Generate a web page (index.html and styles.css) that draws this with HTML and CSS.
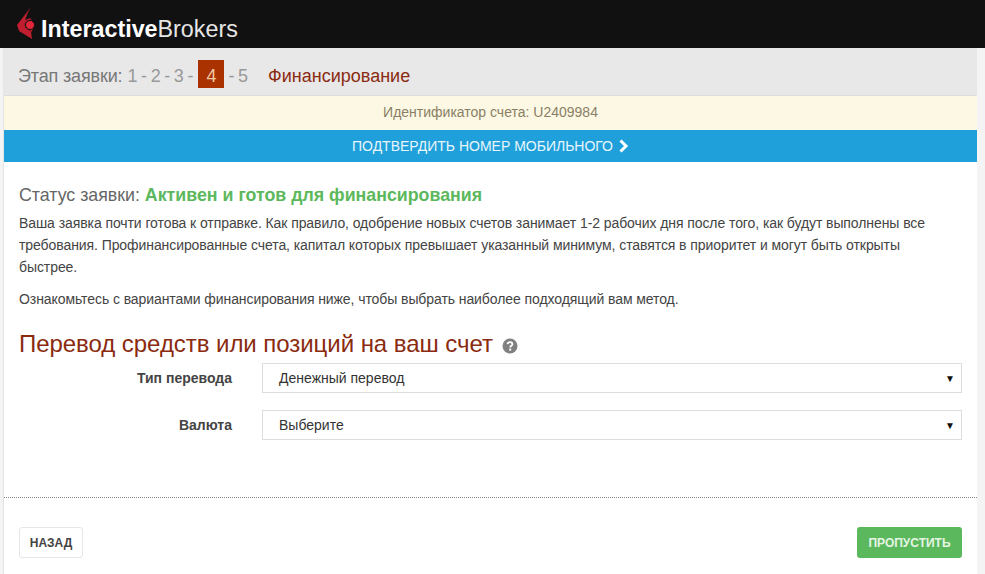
FILE: index.html
```html
<!DOCTYPE html>
<html lang="ru">
<head>
    <meta charset="UTF-8">
    <title>Interactive Brokers</title>
    <link rel="stylesheet" href="styles.css">
</head>
<body>
    <div class="top-bar">
        <svg class="logo-mark" width="18" height="32" viewBox="0 0 18 32">
            <path d="M14 0 L0 18 L2 24 L15 32 L14 25 L8 20 C7 13 10 7 14 0 Z" fill="#c01f30"/>
            <path d="M8 19 L8 13 L13 11 L18 18 L14 26 Z" fill="#a81a2a"/>
            <circle cx="13" cy="18" r="4.5" fill="#e3263a" stroke="#111" stroke-width="1"/>
        </svg>
        <span class="logo-text"><b>Interactive</b>Brokers</span>
    </div>
    <div class="panel">
        <div class="steps">
            <span class="steps-label">Этап заявки:</span>
            <span class="steps-nums">1 - 2 - 3 -</span>
            <span class="step-current">4</span>
            <span class="steps-nums steps-last">- 5</span>
            <span class="step-title">Финансирование</span>
        </div>
        <div class="account-id">Идентификатор счета: U2409984</div>
        <div class="confirm-bar">ПОДТВЕРДИТЬ НОМЕР МОБИЛЬНОГО
            <svg width="11" height="14" viewBox="0 0 11 14"><path d="M2.5 1.5 L8 7 L2.5 12.5" fill="none" stroke="#fff" stroke-width="3"/></svg>
        </div>
        <div class="content">
            <div class="status">Статус заявки: <b>Активен и готов для финансирования</b></div>
            <p>Ваша заявка почти готова к отправке. Как правило, одобрение новых счетов занимает 1-2 рабочих дня после того, как будут выполнены все требования. Профинансированные счета, капитал которых превышает указанный минимум, ставятся в приоритет и могут быть открыты быстрее.</p>
            <p>Ознакомьтесь с вариантами финансирования ниже, чтобы выбрать наиболее подходящий вам метод.</p>
            <h2>Перевод средств или позиций на ваш счет<svg class="help" width="16" height="16" viewBox="0 0 16 16"><circle cx="8" cy="8" r="7.5" fill="#808080"/><path d="M5.6 6.2 C5.8 4.8 6.8 4.2 8 4.2 C9.4 4.2 10.4 5 10.4 6.2 C10.4 7.8 8.2 7.8 8.2 9.4" fill="none" stroke="#fff" stroke-width="1.8"/><rect x="7.2" y="10.6" width="2" height="2" fill="#fff"/></svg></h2>
            <div class="form-row">
                <label>Тип перевода</label>
                <div class="select"><span>Денежный перевод</span><span class="arrow">▼</span></div>
            </div>
            <div class="form-row">
                <label>Валюта</label>
                <div class="select"><span>Выберите</span><span class="arrow">▼</span></div>
            </div>
        </div>
        <div class="actions">
            <button class="btn btn-back">НАЗАД</button>
            <button class="btn btn-skip">ПРОПУСТИТЬ</button>
        </div>
    </div>
</body>
</html>
```

FILE: styles.css
```css
html, body {
    margin: 0;
    height: 574px;
    overflow: hidden;
}

body {
    background-color: #f4f4f4;
    font-family: "Liberation Sans", Arial, sans-serif;
    color: #444;
}

.top-bar {
    height: 48px;
    background-color: #111;
    display: flex;
    align-items: flex-end;
    padding-left: 17px;
    box-sizing: border-box;
}

.logo-mark {
    margin-bottom: 9px;
    margin-right: 6px;
}

.logo-text {
    color: #e6e6e6;
    font-size: 23.3px;
    line-height: 27px;
    margin-bottom: 5px;
}

.logo-text b {
    color: #fff;
}

.panel {
    margin: 0 8px 0 3px;
    background-color: #fff;
    border-left: 1px solid #e4e4e4;
    height: 526px;
}

.steps {
    height: 48px;
    box-sizing: border-box;
    padding: 0 0 0 14px;
    background-color: #e8e8e8;
    border-bottom: 1px solid #ddd;
    display: flex;
    align-items: center;
    font-size: 18px;
    color: #777;
}

.steps-label {
    letter-spacing: -0.15px;
    padding-top: 10px;
}

.steps-nums {
    color: #999;
    margin-left: 5px;
    word-spacing: -1.4px;
    padding-top: 10px;
}

.step-current {
    background-color: #a93200;
    color: #f0c8a0;
    width: 26px;
    height: 28px;
    line-height: 32px;
    text-align: center;
    margin: 4px 0 0 5px;
}

.steps-last {
    margin-left: 4px;
}

.step-title {
    color: #8a2b10;
    margin-left: 20px;
    padding-top: 10px;
}

.account-id {
    height: 34px;
    line-height: 32px;
    box-sizing: border-box;
    background-color: #fcf8e3;
    text-align: center;
    font-size: 14px;
    color: #8a7f66;
}

.confirm-bar {
    height: 32px;
    background-color: #1fa0da;
    color: #e8f6fc;
    font-size: 14px;
    display: flex;
    align-items: center;
    justify-content: center;
    gap: 5px;
}

.content {
    padding: 0 15px;
    height: 336px;
    box-sizing: border-box;
    border-bottom: 1px dotted #888;
}

.status {
    font-size: 17.8px;
    padding-top: 23px;
    line-height: 20px;
    color: #666;
}

.status b {
    color: #5cb85c;
}

p {
    font-size: 14px;
    line-height: 22px;
    margin: 0 0 10px;
    color: #444;
    letter-spacing: -0.08px;
    max-width: 915px;
}

.status + p {
    margin-top: 7px;
}

h2 {
    font-weight: normal;
    font-size: 24px;
    line-height: 30px;
    color: #8a2b10;
    margin: 19px 0 4px;
    letter-spacing: -0.05px;
}

.help {
    margin-left: 9px;
    vertical-align: -2px;
}

.form-row {
    display: flex;
    align-items: center;
    margin-bottom: 17px;
}

.form-row label {
    width: 213px;
    text-align: right;
    font-weight: bold;
    font-size: 14px;
    color: #444;
    margin-right: 30px;
}

.select {
    flex: 1;
    height: 30px;
    box-sizing: border-box;
    border: 1px solid #ddd;
    display: flex;
    align-items: center;
    justify-content: space-between;
    padding: 0 6px 0 16px;
    font-size: 14px;
    color: #333;
}

.arrow {
    font-size: 10px;
    color: #111;
}

.actions {
    display: flex;
    justify-content: space-between;
    padding: 29px 15px 0;
}

.btn {
    font-family: inherit;
    font-size: 12px;
    font-weight: bold;
    height: 31px;
    border-radius: 3px;
    cursor: pointer;
}

.btn-back {
    width: 64px;
    background-color: #fff;
    border: 1px solid #e6e6e6;
    color: #444;
}

.btn-skip {
    width: 105px;
    background-color: #5cb85c;
    border: none;
    color: #e4f5e4;
}
```
